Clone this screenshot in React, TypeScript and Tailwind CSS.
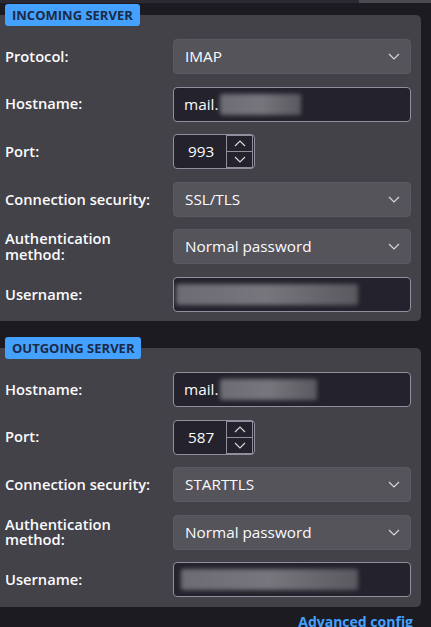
import type { ReactNode } from "react";

const font = { fontFamily: '"Open Sans", "Noto Sans", sans-serif' };

function Chevron({ up = false }: { up?: boolean }) {
  return (
    <svg width="12" height="7" viewBox="0 0 12 7" fill="none" className="text-[#d8d8dc]">
      <polyline
        points={up ? "1,6 6,1 11,6" : "1,1 6,6 11,1"}
        stroke="currentColor"
        strokeWidth="1.2"
        strokeLinejoin="miter"
      />
    </svg>
  );
}

function Row({ label, children }: { label: ReactNode; children: ReactNode }) {
  return (
    <div className="grid grid-cols-[168px_1fr] items-center">
      <div className="text-[14.7px] font-semibold leading-[15.5px] text-[#fbfbfe]">{label}</div>
      {children}
    </div>
  );
}

function Select({ value }: { value: string }) {
  return (
    <div className="flex h-[35px] items-center justify-between rounded-[4px] border border-[#5b5a62] bg-[#55545b] pl-[11px] pr-[10px] text-[15.3px] text-[#fbfbfe]">
      <span>{value}</span>
      <Chevron />
    </div>
  );
}

function Blur({ w, offset = 0 }: { w: number; offset?: number }) {
  return (
    <span
      className="inline-block h-[21px] rounded-[2px] bg-gradient-to-r from-[#6d6c74] via-[#77767d] to-[#5a5960] blur-[2px]"
      style={{ width: w, marginLeft: offset }}
    />
  );
}

function TextInput({ prefix, blur, offset }: { prefix?: string; blur: number; offset?: number }) {
  return (
    <div className="flex h-[35px] items-center overflow-hidden rounded-[4px] border border-[#8f8f9d] bg-[#24222c] pl-[10px] text-[15.3px] text-[#fbfbfe]">
      {prefix && <span>{prefix}</span>}
      <Blur w={blur} offset={offset} />
    </div>
  );
}

function PortInput({ value }: { value: string }) {
  return (
    <div className="flex h-[35px] w-[82px] items-center rounded-[4px] border border-[#8f8f9d] bg-[#24222c] text-[15.3px] text-[#fbfbfe]">
      <span className="flex-1 pl-[14px]">{value}</span>
      <div className="mr-[1px] flex h-[33px] w-[27px] flex-col">
        <div className="flex flex-1 items-center justify-center border border-[#8f8f9d]">
          <Chevron up />
        </div>
        <div className="flex flex-1 items-center justify-center border border-t-0 border-[#8f8f9d]">
          <Chevron />
        </div>
      </div>
    </div>
  );
}

function Panel({ title, children, className }: { title: string; children: ReactNode; className?: string }) {
  return (
    <div className={`relative rounded-r-[5px] bg-[#434248] pl-[5px] pr-[10px] pt-[24px] ${className ?? ""}`}>
      <div className="absolute -top-[11px] left-[5px] rounded-[3px] bg-[#45a1ff] px-[7px] py-[3px] text-[13px] font-bold leading-[16px] text-[#1b2a44]">
        {title}
      </div>
      <div className="flex flex-col gap-[12.6px]">{children}</div>
    </div>
  );
}

export default function App() {
  return (
    <div className="h-[627px] w-[431px] overflow-hidden bg-[#1c1b22]" style={font}>
      <div className="flex h-[3px]">
        <div className="w-[359px] bg-[#2b2a33]" />
        <div className="flex-1 bg-[#4a4a50]" />
      </div>
      <div className="w-[421px] pt-[12px]">
        <Panel title="INCOMING SERVER" className="pb-[9px]">
          <Row label="Protocol:">
            <Select value="IMAP" />
          </Row>
          <Row label="Hostname:">
            <TextInput prefix="mail." blur={81} offset={2} />
          </Row>
          <Row label="Port:">
            <PortInput value="993" />
          </Row>
          <Row label="Connection security:">
            <Select value="SSL/TLS" />
          </Row>
          <Row label={<>Authentication<br />method:</>}>
            <Select value="Normal password" />
          </Row>
          <Row label="Username:">
            <TextInput blur={182} offset={-8} />
          </Row>
        </Panel>

        <Panel title="OUTGOING SERVER" className="mt-[27px] pb-[10px]">
          <Row label="Hostname:">
            <TextInput prefix="mail." blur={97} offset={2} />
          </Row>
          <Row label="Port:">
            <PortInput value="587" />
          </Row>
          <Row label="Connection security:">
            <Select value="STARTTLS" />
          </Row>
          <Row label={<>Authentication<br />method:</>}>
            <Select value="Normal password" />
          </Row>
          <Row label="Username:">
            <TextInput blur={177} offset={-3} />
          </Row>
        </Panel>

        <div className="mt-[4px] pr-[8px] text-right text-[14px] font-bold text-[#45a1ff]">
          Advanced config
        </div>
      </div>
    </div>
  );
}
